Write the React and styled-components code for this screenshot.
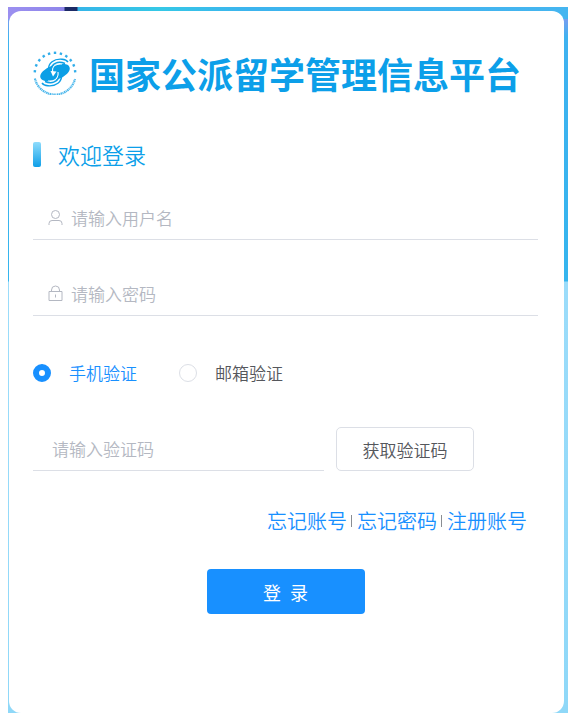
import React, { useState } from "react";
import styled, { createGlobalStyle } from "styled-components";

const GlobalStyle = createGlobalStyle`
  * {
    box-sizing: border-box;
  }

  body {
    margin: 0;
    background: #fff;
    font-family: "Noto Sans CJK SC", sans-serif;
    font-weight: 350;
    color: #55575c;
  }

  input, button {
    font: inherit;
    color: inherit;
  }
`;

const Backdrop = styled.div`
  display: flex;
  min-height: calc(100vh - 17px);
  margin: 7px 2px 10px 8px;
  padding: 4px 4px 0 1px;
  background:
    linear-gradient(90deg, #9b8ff0 0, #8f86ea 56px, #1c2a66 57px, #1c2a66 69px, #35b5e8 70px, #35c8e6 150px, #3cb4ee 240px, #45b5f0 100%) 0 0 / 100% 12px no-repeat,
    linear-gradient(180deg, #9b8ff0 0, #3fb2f0 30px, #35b5ee 274px, #9bdcfa 275px, #8fd8f8 100%);
`;

const Card = styled.main`
  flex: 1;
  padding: 40px 26px 24px 24px;
  border-radius: 12px;
  background: #fff;
`;

const Brand = styled.header`
  display: flex;
  align-items: center;
  gap: 12px;
  height: 44px;
`;

const Logo = styled.svg`
  flex: none;
  width: 44px;
  height: 44px;
  fill: #0c9fe6;
`;

const Title = styled.h1`
  margin: 0;
  font-size: 36px;
  font-weight: 700;
  line-height: 44px;
  white-space: nowrap;
  color: #0c9fe9;
`;

const Welcome = styled.h2`
  display: flex;
  align-items: center;
  gap: 17px;
  margin: 43px 0 0;
  font-size: 22px;
  font-weight: 350;
  line-height: 32px;
  color: #0c9fe9;

  &::before {
    content: "";
    width: 8px;
    height: 25px;
    border-radius: 2px;
    background: linear-gradient(180deg, #8fdcfc, #0f9fe8);
  }
`;

const Field = styled.label`
  display: flex;
  align-items: center;
  gap: 8px;
  flex: ${(props) => (props.$short ? "0 1 291px" : "none")};
  height: 44px;
  margin-top: ${(props) => props.$top || 0}px;
  padding-left: ${(props) => (props.$short ? 19 : 15)}px;
  border-bottom: 1px solid #dcdfe6;
`;

const Input = styled.input`
  flex: 1;
  min-width: 0;
  padding: 0;
  border: 0;
  outline: 0;
  background: none;
  font-size: 17px;
  line-height: 24px;

  &::placeholder {
    color: #b4b8c2;
    opacity: 1;
  }
`;

const FieldIcon = styled.svg`
  flex: none;
  width: 15px;
  height: 17px;
  fill: none;
  stroke: #b4b8c2;
`;

const Radios = styled.div`
  display: flex;
  gap: 42px;
  margin-top: 45px;
`;

const RadioLabel = styled.label`
  display: flex;
  align-items: center;
  gap: 18px;
  font-size: 17px;
  line-height: 24px;
  color: ${(props) => (props.$checked ? "#1890ff" : "#55575c")};
`;

const Radio = styled.input`
  appearance: none;
  width: 18px;
  height: 18px;
  margin: 0;
  border: 1px solid #dcdfe6;
  border-radius: 50%;
  background: #fff;

  &:checked {
    border: 6px solid #1890ff;
  }
`;

const CodeRow = styled.div`
  display: flex;
  gap: 12px;
  margin-top: 42px;
`;

const CodeButton = styled.button`
  width: 138px;
  height: 44px;
  padding: 0;
  border: 1px solid #dcdfe6;
  border-radius: 5px;
  background: #fff;
  font-size: 17px;
`;

const Links = styled.nav`
  display: flex;
  align-items: center;
  justify-content: flex-end;
  margin: 36px 11px 0 0;
  line-height: 28px;
`;

const Link = styled.a`
  font-size: 20px;
  text-decoration: none;
  color: #1890ff;

  & + & {
    display: flex;
    align-items: center;
  }

  & + &::before {
    content: "";
    width: 1px;
    height: 12px;
    margin: 0 5px 0 4px;
    background: #8a8d92;
  }
`;

const LoginButton = styled.button`
  display: block;
  width: 158px;
  height: 45px;
  margin: 34px auto 0;
  border: 0;
  border-radius: 4px;
  background: #1890ff;
  font-size: 18px;
  font-weight: 400;
  color: #fff;
`;

const RING_MARKS = [-85, -68, -51, -34, -17, 0, 17, 34, 51, 68, 85];

const BrandLogo = () => (
  <Logo viewBox="0 0 44 44" aria-hidden="true">
    {RING_MARKS.map((angle) => (
      <path key={angle} d="M20.8 0.6h2.4v2.4h-2.4z" opacity="0.85" transform={`rotate(${angle} 22 22)`} />
    ))}
    {/* lettering round the lower half, too small to read */}
    <path
      d="M1.9 27.5A20.6 20.6 0 0 0 42.1 27.5"
      fill="none"
      stroke="#4db8ec"
      strokeWidth="2.2"
      strokeDasharray="1.6 0.5 1 0.6"
    />
    <ellipse cx="22" cy="21.5" rx="15.5" ry="7.5" transform="rotate(-20 22 21.5)" />
    <g fill="none" stroke="#fff" strokeWidth="1.1">
      <path d="M20 22C18 15 23 12.5 29 13" />
      <path d="M25 21C26 28 21 30.5 15 30" />
    </g>
    <path d="M17.5 20L23.5 20.5L20 25.5Z" fill="#fff" />
    <g fill="none" stroke="#0c9fe6" strokeWidth="1.4">
      <path d="M15.5 19C15 12 21 7.5 29 8.2C32 8.5 34 9.5 35 11" />
      <path d="M18 18C19 12.5 25 9.5 32 12.5" />
      <path d="M28.5 24C29 31 23 35.5 15 34.8C12 34.5 10 33.5 9 32" />
      <path d="M26 25C25 30.5 19 33.5 12 30.5" />
    </g>
  </Logo>
);

const UserIcon = () => (
  <FieldIcon viewBox="0 0 15 17" aria-hidden="true">
    <circle cx="7.5" cy="5.5" r="4" />
    <path d="M1 16V14.5Q1 11.5 4 11.5H11Q14 11.5 14 14.5V16" />
  </FieldIcon>
);

const LockIcon = () => (
  <FieldIcon viewBox="0 0 15 17" aria-hidden="true">
    <path d="M1 6.5H14V15.5H1ZM3.5 6.5V5A4 4 0 0 1 11.5 5V6.5M7.5 9.5V12.5" />
  </FieldIcon>
);

const App = () => {
  const [method, setMethod] = useState("phone");

  return (
    <>
      <GlobalStyle />
      <Backdrop>
        <Card>
          <Brand>
            <BrandLogo />
            <Title>国家公派留学管理信息平台</Title>
          </Brand>
          <Welcome>欢迎登录</Welcome>
          <form onSubmit={(e) => e.preventDefault()}>
            <Field $top={26}>
              <UserIcon />
              <Input type="text" aria-label="用户名" placeholder="请输入用户名" />
            </Field>
            <Field $top={32}>
              <LockIcon />
              <Input type="password" aria-label="密码" placeholder="请输入密码" />
            </Field>
            <Radios>
              <RadioLabel $checked={method === "phone"}>
                <Radio type="radio" name="method" checked={method === "phone"} onChange={() => setMethod("phone")} />
                手机验证
              </RadioLabel>
              <RadioLabel $checked={method === "email"}>
                <Radio type="radio" name="method" checked={method === "email"} onChange={() => setMethod("email")} />
                邮箱验证
              </RadioLabel>
            </Radios>
            <CodeRow>
              <Field $short>
                <Input type="text" aria-label="验证码" placeholder="请输入验证码" />
              </Field>
              <CodeButton type="button">获取验证码</CodeButton>
            </CodeRow>
            <Links>
              <Link href="#account">忘记账号</Link>
              <Link href="#password">忘记密码</Link>
              <Link href="#register">注册账号</Link>
            </Links>
            <LoginButton type="submit">登{"\u2002"}录</LoginButton>
          </form>
        </Card>
      </Backdrop>
    </>
  );
};

export default App;
